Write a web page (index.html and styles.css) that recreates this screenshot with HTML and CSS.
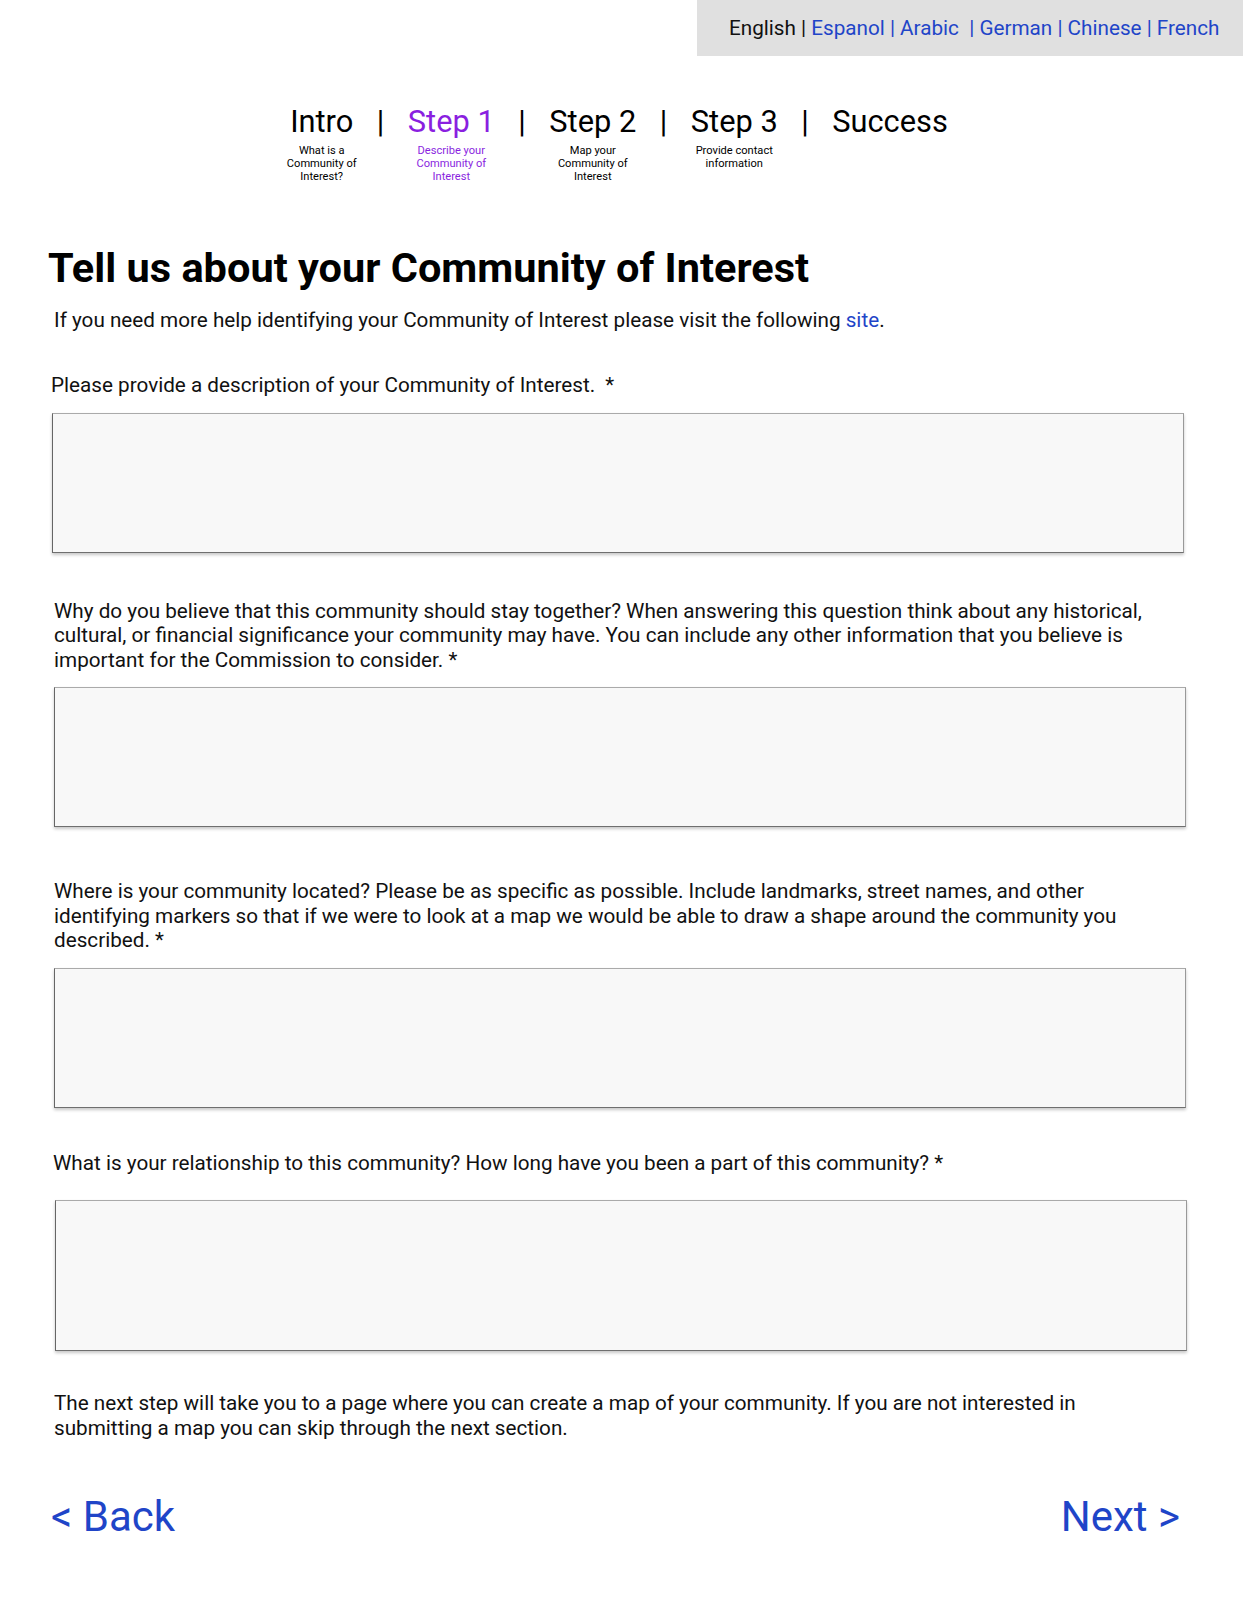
FILE: index.html
```html
<!DOCTYPE html>
<html lang="en">
<head>
<meta charset="utf-8">
<title>Tell us about your Community of Interest</title>
<link rel="stylesheet" href="styles.css">
</head>
<body>
<div class="topbar">
  <div class="lang">English | <span class="lang-links">Espanol | Arabic &nbsp;| German | Chinese | French</span></div>
</div>

<nav class="steps">
  <div class="step">
    <div class="step-title">Intro</div>
    <div class="step-sub">What is a<br>Community of<br>Interest?</div>
  </div>
  <div class="sep">|</div>
  <div class="step step--active">
    <div class="step-title">Step 1</div>
    <div class="step-sub">Describe your<br>Community of<br>Interest</div>
  </div>
  <div class="sep">|</div>
  <div class="step">
    <div class="step-title">Step 2</div>
    <div class="step-sub">Map your<br>Community of<br>Interest</div>
  </div>
  <div class="sep">|</div>
  <div class="step">
    <div class="step-title">Step 3</div>
    <div class="step-sub">Provide contact<br>information</div>
  </div>
  <div class="sep">|</div>
  <div class="step">
    <div class="step-title">Success</div>
  </div>
</nav>

<main class="page">
  <h1 class="title">Tell us about your Community of Interest</h1>
  <p class="intro">If you need more help identifying your Community of Interest please visit the following <a class="link" href="#">site</a>.</p>

  <div class="field field--1">
    <label class="label label--tight">Please provide a description of your Community of Interest. &nbsp;*</label>
    <div class="box box--1"></div>
  </div>

  <div class="field field--2">
    <label class="label">Why do you believe that this community should stay together? When answering this question think about any historical, cultural, or financial significance your community may have. You can include any other information that you believe is important for the Commission to consider. *</label>
    <div class="box"></div>
  </div>

  <div class="field field--3">
    <label class="label">Where is your community located? Please be as specific as possible. Include landmarks, street names, and other identifying markers so that if we were to look at a map we would be able to draw a shape around the community you described. *</label>
    <div class="box"></div>
  </div>

  <div class="field field--4">
    <label class="label label--wide">What is your relationship to this community? How long have you been a part of this community? *</label>
    <div class="box box--4"></div>
  </div>

  <p class="note">The next step will take you to a page where you can create a map of your community. If you are not interested in submitting a map you can skip through the next section.</p>

  <div class="nav-buttons">
    <a class="navlink" href="#">&lt; Back</a>
    <a class="navlink" href="#">Next &gt;</a>
  </div>
</main>
</body>
</html>
```

FILE: styles.css
```css
* { box-sizing: border-box; }

body {
  margin: 0;
  font-family: Roboto, "Liberation Sans", Arial, sans-serif;
  color: #111;
  background: #fff;
}

.topbar {
  display: flex;
  justify-content: flex-end;
}

.lang {
  width: 546px;
  height: 56px;
  background: #e0e0e0;
  padding-left: 32px;
  font-size: 20.7px;
  line-height: 56px;
  color: #111;
  white-space: nowrap;
}

.lang-links { color: #1f45c8; }

.steps {
  display: flex;
  justify-content: center;
  align-items: flex-start;
  gap: 23.5px;
  margin-top: 48px;
  padding-right: 5px;
}

.step {
  display: flex;
  flex-direction: column;
  align-items: center;
  color: #000;
}

.step-title {
  font-size: 30.8px;
  line-height: 36px;
  font-weight: 400;
}

.step-sub {
  font-size: 11.1px;
  line-height: 13px;
  text-align: center;
  margin: 4px -6px 0;
  white-space: nowrap;
}

.step--active { color: #8a1fe0; }

.sep {
  font-size: 30.8px;
  line-height: 36px;
  color: #000;
}

.page {
  padding: 0 57px 80px 54px;
}

.title {
  margin: 59px 0 0 -6px;
  font-size: 41.5px;
  line-height: 52px;
  font-weight: 700;
  color: #000;
}

.intro {
  margin: 14px 0 0;
  font-size: 20.7px;
  line-height: 24px;
}

.link { color: #1f45c8; text-decoration: none; }

.field { display: flex; flex-direction: column; }
.field--1 { margin-top: 41px; }
.field--2 { margin-top: 46px; }
.field--3 { margin-top: 52px; }
.field--4 { margin-top: 43px; }

.label {
  font-size: 20.7px;
  line-height: 24.5px;
  margin-bottom: 15px;
  padding-right: 30px;
}

.label--tight { margin-left: -3px; margin-bottom: 15px; }
.label--wide { margin-left: -1px; margin-bottom: 25px; }

.box {
  height: 140px;
  background: #f8f8f8;
  border: 1px solid;
  border-color: #aaa #999 #6f6f6f #666;
  box-shadow: 0 2px 3px rgba(0, 0, 0, 0.22);
}

.box--1 { margin-left: -2px; margin-right: 2px; }
.box--4 { height: 151px; margin-left: 1px; margin-right: -1px; }

.note {
  margin: 40px 0 0;
  padding-right: 30px;
  font-size: 20.7px;
  line-height: 24.5px;
}

.nav-buttons {
  display: flex;
  justify-content: space-between;
  margin-top: 52px;
  padding-right: 6px;
}

.navlink {
  font-size: 42px;
  line-height: 50px;
  color: #1f45c8;
  text-decoration: none;
}

.navlink:first-child { margin-left: -3px; }
```
